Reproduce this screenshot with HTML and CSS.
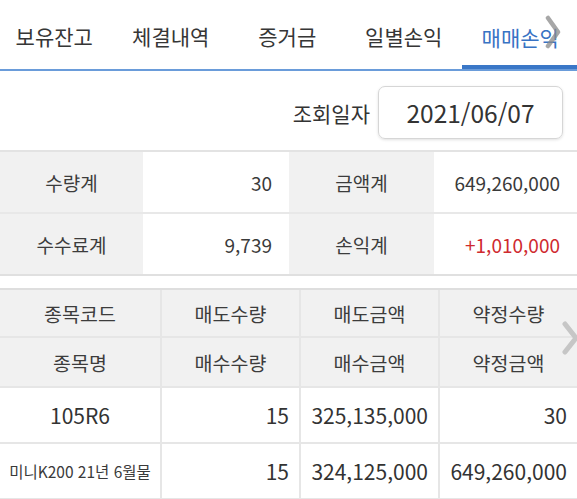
FILE: index.html
```html
<!DOCTYPE html>
<html lang="ko">
<head>
<meta charset="utf-8">
<title>매매손익</title>
<link rel="stylesheet" href="styles.css">
</head>
<body>
<div class="screen">
  <nav class="tabs">
    <div class="tab">보유잔고</div>
    <div class="tab">체결내역</div>
    <div class="tab">증거금</div>
    <div class="tab">일별손익</div>
    <div class="tab active">매매손익</div>
    <svg class="chev chev-top" width="16" height="34" viewBox="0 0 16 34"><polyline points="3,3 13,17 3,31" fill="none" stroke="#8a8a8a" stroke-width="4.5" stroke-linecap="round" stroke-linejoin="round"/></svg>
  </nav>

  <div class="query">
    <span class="query-label">조회일자</span>
    <div class="date-box">2021/06/07</div>
  </div>

  <div class="summary">
    <div class="s-label">수량계</div>
    <div class="s-value">30</div>
    <div class="s-label">금액계</div>
    <div class="s-value">649,260,000</div>
    <div class="s-label">수수료계</div>
    <div class="s-value">9,739</div>
    <div class="s-label">손익계</div>
    <div class="s-value plus">+1,010,000</div>
  </div>

  <div class="grid-wrap">
    <div class="grid">
      <div class="h h1">종목코드</div>
      <div class="h h1">매도수량</div>
      <div class="h h1">매도금액</div>
      <div class="h h1">약정수량</div>
      <div class="h h2">종목명</div>
      <div class="h h2">매수수량</div>
      <div class="h h2">매수금액</div>
      <div class="h h2">약정금액</div>
      <div class="d d1 center">105R6</div>
      <div class="d d1">15</div>
      <div class="d d1">325,135,000</div>
      <div class="d d1">30</div>
      <div class="d d2 center small">미니K200 21년 6월물</div>
      <div class="d d2">15</div>
      <div class="d d2">324,125,000</div>
      <div class="d d2">649,260,000</div>
    </div>
    <svg class="chev chev-table" width="18" height="34" viewBox="0 0 18 34"><polyline points="4,3 15,17 4,31" fill="none" stroke="#c6c6c6" stroke-width="5" stroke-linecap="round" stroke-linejoin="round"/></svg>
  </div>
</div>
</body>
</html>
```

FILE: styles.css
```css
* { box-sizing: border-box; }

html, body {
  margin: 0;
  padding: 0;
  background: #ffffff;
}

body {
  font-family: "Noto Sans CJK KR", "Noto Sans", sans-serif;
  color: #333333;
  width: 577px;
  overflow: hidden;
}

.screen {
  width: 577px;
}

/* Tabs */
.tabs {
  position: relative;
  display: flex;
  height: 71px;
  border-bottom: 2px solid #6a9cda;
  overflow: hidden;
}

.tab {
  flex: 0 0 116.5px;
  display: flex;
  align-items: center;
  justify-content: center;
  padding-top: 3px;
  font-size: 21px;
  color: #363636;
  white-space: nowrap;
}

.tab:first-child {
  margin-left: -4px;
}

.tab.active {
  color: #3873c4;
  height: 71px;
  margin-bottom: -2px;
  box-shadow: inset 0 -6px 0 #3a77c7;
}

.chev {
  position: absolute;
}

.chev-top {
  left: 545px;
  top: 15px;
  opacity: 0.75;
}

/* Query row */
.query {
  display: flex;
  justify-content: flex-end;
  align-items: center;
  gap: 8px;
  height: 79px;
  padding: 4px 14px 0 0;
}

.query-label {
  font-size: 21px;
  color: #333333;
}

.date-box {
  width: 185px;
  height: 53px;
  border: 1px solid #d6d6d6;
  border-radius: 7px;
  box-shadow: 0 1px 3px rgba(0, 0, 0, 0.12);
  display: flex;
  align-items: center;
  justify-content: center;
  font-size: 24.5px;
  color: #333333;
}

/* Summary */
.summary {
  display: grid;
  grid-template-columns: 143px 146px 145px 143px;
  grid-auto-rows: 62px;
  border-top: 2px solid #e3e3e3;
}

.summary > div {
  display: flex;
  align-items: center;
  font-size: 19px;
  border-bottom: 2px solid #e8e8e8;
}

.summary > div:nth-last-child(-n+4) {
  border-bottom-color: #e0e0e0;
}

.s-label {
  background: #f1f1f1;
  justify-content: center;
  color: #3c3c3c;
}

.s-value {
  justify-content: flex-end;
  padding-right: 17px;
  color: #3a3a3a;
}

.s-value.plus {
  color: #cf2a2f;
}

/* Main grid */
.grid-wrap {
  position: relative;
  margin-top: 12px;
}

.grid {
  display: grid;
  grid-template-columns: 162px 139px 139px 137px;
  grid-template-rows: 48px 50px 56px 56px;
  border-top: 2px solid #dedede;
}

.grid > div {
  display: flex;
  align-items: center;
  border-bottom: 2px solid #e6e6e6;
  border-right: 2px solid #e6e6e6;
}

.grid > div:nth-child(4n) {
  border-right: none;
}

.h {
  background: #f1f1f1;
  justify-content: center;
  font-size: 19.5px;
  color: #3c3c3c;
}

.d {
  justify-content: flex-end;
  padding-right: 10px;
  font-size: 21px;
  color: #333333;
}

.d.center {
  justify-content: center;
  padding-right: 0;
}

.d.small {
  font-size: 15.5px;
  color: #3a3a3a;
  white-space: nowrap;
}

.chev-table {
  left: 561px;
  top: 33px;
}
```
